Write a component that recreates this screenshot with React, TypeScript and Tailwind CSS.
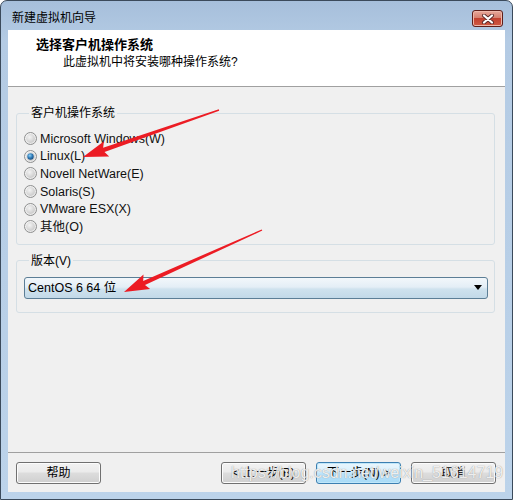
const ui = "font-['Liberation_Sans','Noto_Sans_CJK_SC',sans-serif]"

const osList = [
  "Microsoft Windows(W)",
  "Linux(L)",
  "Novell NetWare(E)",
  "Solaris(S)",
  "VMware ESX(X)",
  "其他(O)",
]

const Radio = ({ checked }: { checked: boolean }) => (
  <svg width="13" height="13" viewBox="0 0 13 13" className="shrink-0">
    <defs>
      <linearGradient id="rOut" x1="0" y1="0" x2="1" y2="1">
        <stop offset="0" stopColor="#f6f6f6" />
        <stop offset="1" stopColor="#e4e4e4" />
      </linearGradient>
      <radialGradient id="rIn" cx="0.4" cy="0.35" r="0.7">
        <stop offset="0" stopColor="#f3f3f3" />
        <stop offset="1" stopColor="#c9c9c9" />
      </radialGradient>
      <radialGradient id="rDot" cx="0.4" cy="0.35" r="0.7">
        <stop offset="0" stopColor="#8fd0f6" />
        <stop offset="0.55" stopColor="#2d79b6" />
        <stop offset="1" stopColor="#1b4a78" />
      </radialGradient>
    </defs>
    <circle cx="6.5" cy="6.5" r="6" fill="url(#rOut)" stroke="#8e8f8f" />
    <circle cx="6.5" cy="6.5" r="4.4" fill="url(#rIn)" />
    {checked && <circle cx="6.5" cy="6.5" r="3.2" fill="url(#rDot)" />}
  </svg>
)

const Button = ({ label, primary }: { label: string; primary?: boolean }) => (
  <button
    className={
      primary
        ? "w-[85px] h-[22px] rounded-[3px] border border-[#3c7fb1] bg-[linear-gradient(#eaf6fd,#d9f0fc_45%,#bee6fd_50%,#a7d9f5)] shadow-[inset_0_0_0_1px_#c0e7fa] text-[12px] leading-[20px] text-black"
        : "w-[85px] h-[22px] rounded-[3px] border border-[#707070] bg-[linear-gradient(#f2f2f2,#ebebeb_45%,#dddddd_50%,#cfcfcf)] shadow-[inset_0_0_0_1px_#fcfcfc] text-[12px] leading-[20px] text-black"
    }
  >
    {label}
  </button>
)

// tapered arrow drawn as one polygon
const arrow = (x1: number, y1: number, x2: number, y2: number) => {
  const L = Math.hypot(x2 - x1, y2 - y1)
  const ux = (x2 - x1) / L
  const uy = (y2 - y1) / L
  const nx = -uy
  const ny = ux
  const head = 22
  const bx = x2 - ux * head
  const by = y2 - uy * head
  const p = (x: number, y: number) => `${x.toFixed(1)},${y.toFixed(1)}`
  return [
    p(x1 + nx * 0.7, y1 + ny * 0.7),
    p(bx + nx * 2.2, by + ny * 2.2),
    p(bx - ux * 3 + nx * 8, by - uy * 3 + ny * 8),
    p(x2, y2),
    p(bx - ux * 3 - nx * 8, by - uy * 3 - ny * 8),
    p(bx - nx * 2.2, by - ny * 2.2),
    p(x1 - nx * 0.7, y1 - ny * 0.7),
  ].join(" ")
}

export default function App() {
  return (
    <div className={`relative w-[513px] h-[500px] overflow-hidden bg-white ${ui}`}>
      <div className="flex flex-col w-full h-full rounded-t-[7px] border border-[#3b4a5b] bg-[linear-gradient(#a6bfdb,#b4cbe4_8%,#bcd3ea)]">
        {/* title bar */}
        <div className="h-[29px] flex items-start justify-between pt-[9px] pl-[11px] pr-[9px]">
          <span className="text-[12px] leading-[17px] text-black">新建虚拟机向导</span>
          <div className="w-[31px] h-[17px] rounded-[3px] border border-[#5e1f1a] bg-[linear-gradient(#e8a99c,#d6806f_45%,#c2412f_50%,#cf5a44)] shadow-[inset_0_0_0_1px_#eeb8aa] flex items-center justify-center">
            <svg width="14" height="10" viewBox="0 0 14 10">
              <path d="M3 1.5 L11 8.5 M11 1.5 L3 8.5" stroke="#5a2a2a" strokeWidth="4" strokeLinecap="round" />
              <path d="M3 1.5 L11 8.5 M11 1.5 L3 8.5" stroke="#ffffff" strokeWidth="2.2" strokeLinecap="round" />
            </svg>
          </div>
        </div>

        {/* client */}
        <div className="flex-1 flex flex-col mx-[7px] mb-[7px] bg-[#f0f0f0]">
          <div className="h-[56px] bg-white pt-[7px]">
            <div className="pl-[28px] text-[13px] leading-[16px] font-bold text-black">选择客户机操作系统</div>
            <div className="pl-[55px] mt-[1px] text-[12px] leading-[16px] text-black">此虚拟机中将安装哪种操作系统?</div>
          </div>
          <div className="h-px bg-[#a0a0a0]" />

          <div className="flex-1 flex flex-col">
            <fieldset className="mt-[18px] ml-[8px] w-[479px] rounded-[3px] border border-[#d5dfe5] pt-[9px] pb-[8px] px-[7px]">
              <legend className="ml-[5px] px-[2px] text-[12px] leading-[16px] text-black">客户机操作系统</legend>
              {osList.map((os, i) => (
                <div key={os} className="h-[17.6px] flex items-center gap-[3px]">
                  <Radio checked={i === 1} />
                  <span className="text-[12.5px] leading-[16px] text-[#111]">{os}</span>
                </div>
              ))}
            </fieldset>

            <fieldset className="mt-[8px] ml-[8px] w-[479px] rounded-[3px] border border-[#d5dfe5] pt-[8px] pb-[13px] pl-[7px] pr-[6px]">
              <legend className="ml-[5px] px-[2px] text-[12px] leading-[16px] text-black">版本(V)</legend>
              <div className="h-[22px] rounded-[3px] border border-[#5c7e96] bg-[linear-gradient(#f2f7fb,#e4eef6_45%,#cfe2ee_55%,#c2d9e8)] flex items-center justify-between pl-[3px] pr-[5px]">
                <span className="text-[12.5px] leading-[16px] text-black">CentOS 6 64 位</span>
                <svg width="8" height="5" viewBox="0 0 8 5">
                  <path d="M0 0 H8 L4 5 Z" fill="#000" />
                </svg>
              </div>
            </fieldset>

            <div className="flex-1" />
            <div className="h-px bg-[#a0a0a0]" />
            <div className="flex items-start pt-[9px] pb-[8px] pl-[8px] pr-[9px]">
              <Button label="帮助" />
              <div className="flex-1" />
              <div className="flex gap-[10px]">
                <Button label="< 上一步(B)" />
                <Button label="下一步(N) >" primary />
                <Button label="取消" />
              </div>
            </div>
          </div>
        </div>
      </div>

      {/* annotation arrows */}
      <svg className="absolute left-0 top-0 pointer-events-none" width="513" height="500">
        <polygon points={arrow(219, 110, 83, 157)} fill="#ec1c24" />
        <polygon points={arrow(262, 230, 124, 292)} fill="#ec1c24" />
      </svg>

      {/* watermark */}
      <div className="absolute left-[231px] top-[463px] text-[16px] leading-[20px] text-white/85 [text-shadow:0_0_1px_#7f7f7f] pointer-events-none">
        https://blog.csdn.net/weixin_51614719
      </div>
    </div>
  )
}
